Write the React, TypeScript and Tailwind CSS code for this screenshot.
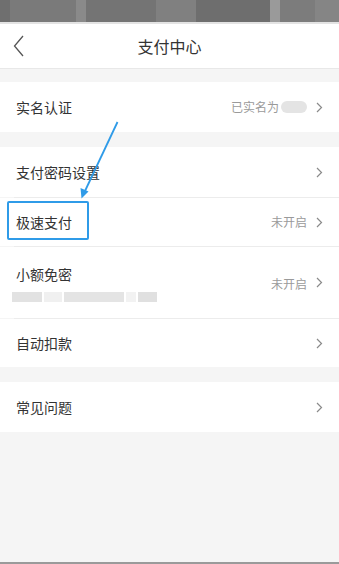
import { ReactNode } from "react";

const font = {
  fontFamily: '"Noto Sans CJK SC", "Noto Sans", "Liberation Sans", sans-serif',
};

function Chevron() {
  return (
    <svg width="7" height="11" viewBox="0 0 7 11" className="ml-[9px]">
      <path d="M1 1 L5.5 5.5 L1 10" fill="none" stroke="#8a8a8a" strokeWidth="1.2" />
    </svg>
  );
}

function Row({
  label,
  value,
  height,
  children,
}: {
  label: ReactNode;
  value?: ReactNode;
  height: string;
  children?: ReactNode;
}) {
  return (
    <div className={`relative flex items-center justify-between bg-white pl-4 pr-4 ${height}`}>
      <div className="flex flex-col">
        <span className="text-[14px] leading-5 text-[#333]">{label}</span>
        {children}
      </div>
      <div className="flex items-center">
        {value}
        <Chevron />
      </div>
    </div>
  );
}

const Divider = () => <div className="ml-[14px] h-px bg-[#ececec]" />;

export default function App() {
  return (
    <div className="relative min-h-[564px] w-full bg-[#f5f5f5]" style={font}>
      {/* blurred status bar */}
      <div className="flex h-[22px] bg-[#737373]">
        <div className="w-[10px] bg-[#6f6f6f]" />
        <div className="w-[66px] bg-[#7a7a7a]" />
        <div className="w-[10px] bg-[#8a8a8a]" />
        <div className="w-[70px] bg-[#747474]" />
        <div className="w-[40px] bg-[#808080]" />
        <div className="w-[74px] bg-[#6e6e6e]" />
        <div className="w-[10px] bg-[#9a9a9a]" />
        <div className="w-[35px] bg-[#7c7c7c]" />
        <div className="flex-1 bg-[#858585]" />
      </div>
      <div className="h-[2px] bg-[#e3e3e3]" />

      {/* header */}
      <div className="relative flex h-[45px] items-center justify-center border-b border-[#e8e8e8] bg-white">
        <svg width="12" height="22" viewBox="0 0 12 22" className="absolute left-[13px] top-[11px]">
          <path d="M10 1 L1.5 11 L10 21" fill="none" stroke="#555" strokeWidth="1.3" />
        </svg>
        <span className="text-[16px] text-[#333]">支付中心</span>
      </div>

      <div className="h-[13px]" />
      <Row
        label="实名认证"
        height="h-[50px]"
        value={
          <span className="flex items-center text-[12px] text-[#9a9a9a]">
            已实名为
            <span className="ml-[2px] inline-block h-[12px] w-[26px] rounded-full bg-[#e4e4e4]" />
          </span>
        }
      />

      <div className="h-[15px]" />
      <Row label="支付密码设置" height="h-[50px]" />
      <Divider />
      <Row
        label="极速支付"
        height="h-[48px]"
        value={<span className="text-[12px] text-[#9a9a9a]">未开启</span>}
      >
        <span className="absolute left-[7px] top-[3px] h-[39px] w-[82px] rounded-[2px] border-2 border-[#2f9be8]" />
      </Row>
      <Divider />
      <Row
        label="小额免密"
        height="h-[71px]"
        value={<span className="mt-[2px] text-[12px] text-[#9a9a9a]">未开启</span>}
      >
        <div className="mt-[8px] -ml-[4px] flex h-[10px] w-[145px] gap-[2px]">
          <div className="w-[30px] bg-[#e2e2e2]" />
          <div className="w-[18px] bg-[#f0f0f0]" />
          <div className="w-[60px] bg-[#e4e4e4]" />
          <div className="w-[10px] bg-[#f2f2f2]" />
          <div className="flex-1 bg-[#e0e0e0]" />
        </div>
      </Row>
      <Divider />
      <Row label="自动扣款" height="h-[48px]" />

      <div className="h-[15px]" />
      <Row label="常见问题" height="h-[50px]" />

      {/* annotation arrow */}
      <svg
        width="339"
        height="564"
        viewBox="0 0 339 564"
        className="pointer-events-none absolute left-0 top-0"
      >
        <line x1="117.5" y1="122" x2="85" y2="191" stroke="#2f9be8" strokeWidth="1.8" />
        <path d="M81.5 198.5 L80.5 188 L88.5 191.5 Z" fill="#2f9be8" />
      </svg>
      <div className="absolute bottom-0 left-0 h-[2px] w-full bg-[#9a9a9a]" />
    </div>
  );
}
